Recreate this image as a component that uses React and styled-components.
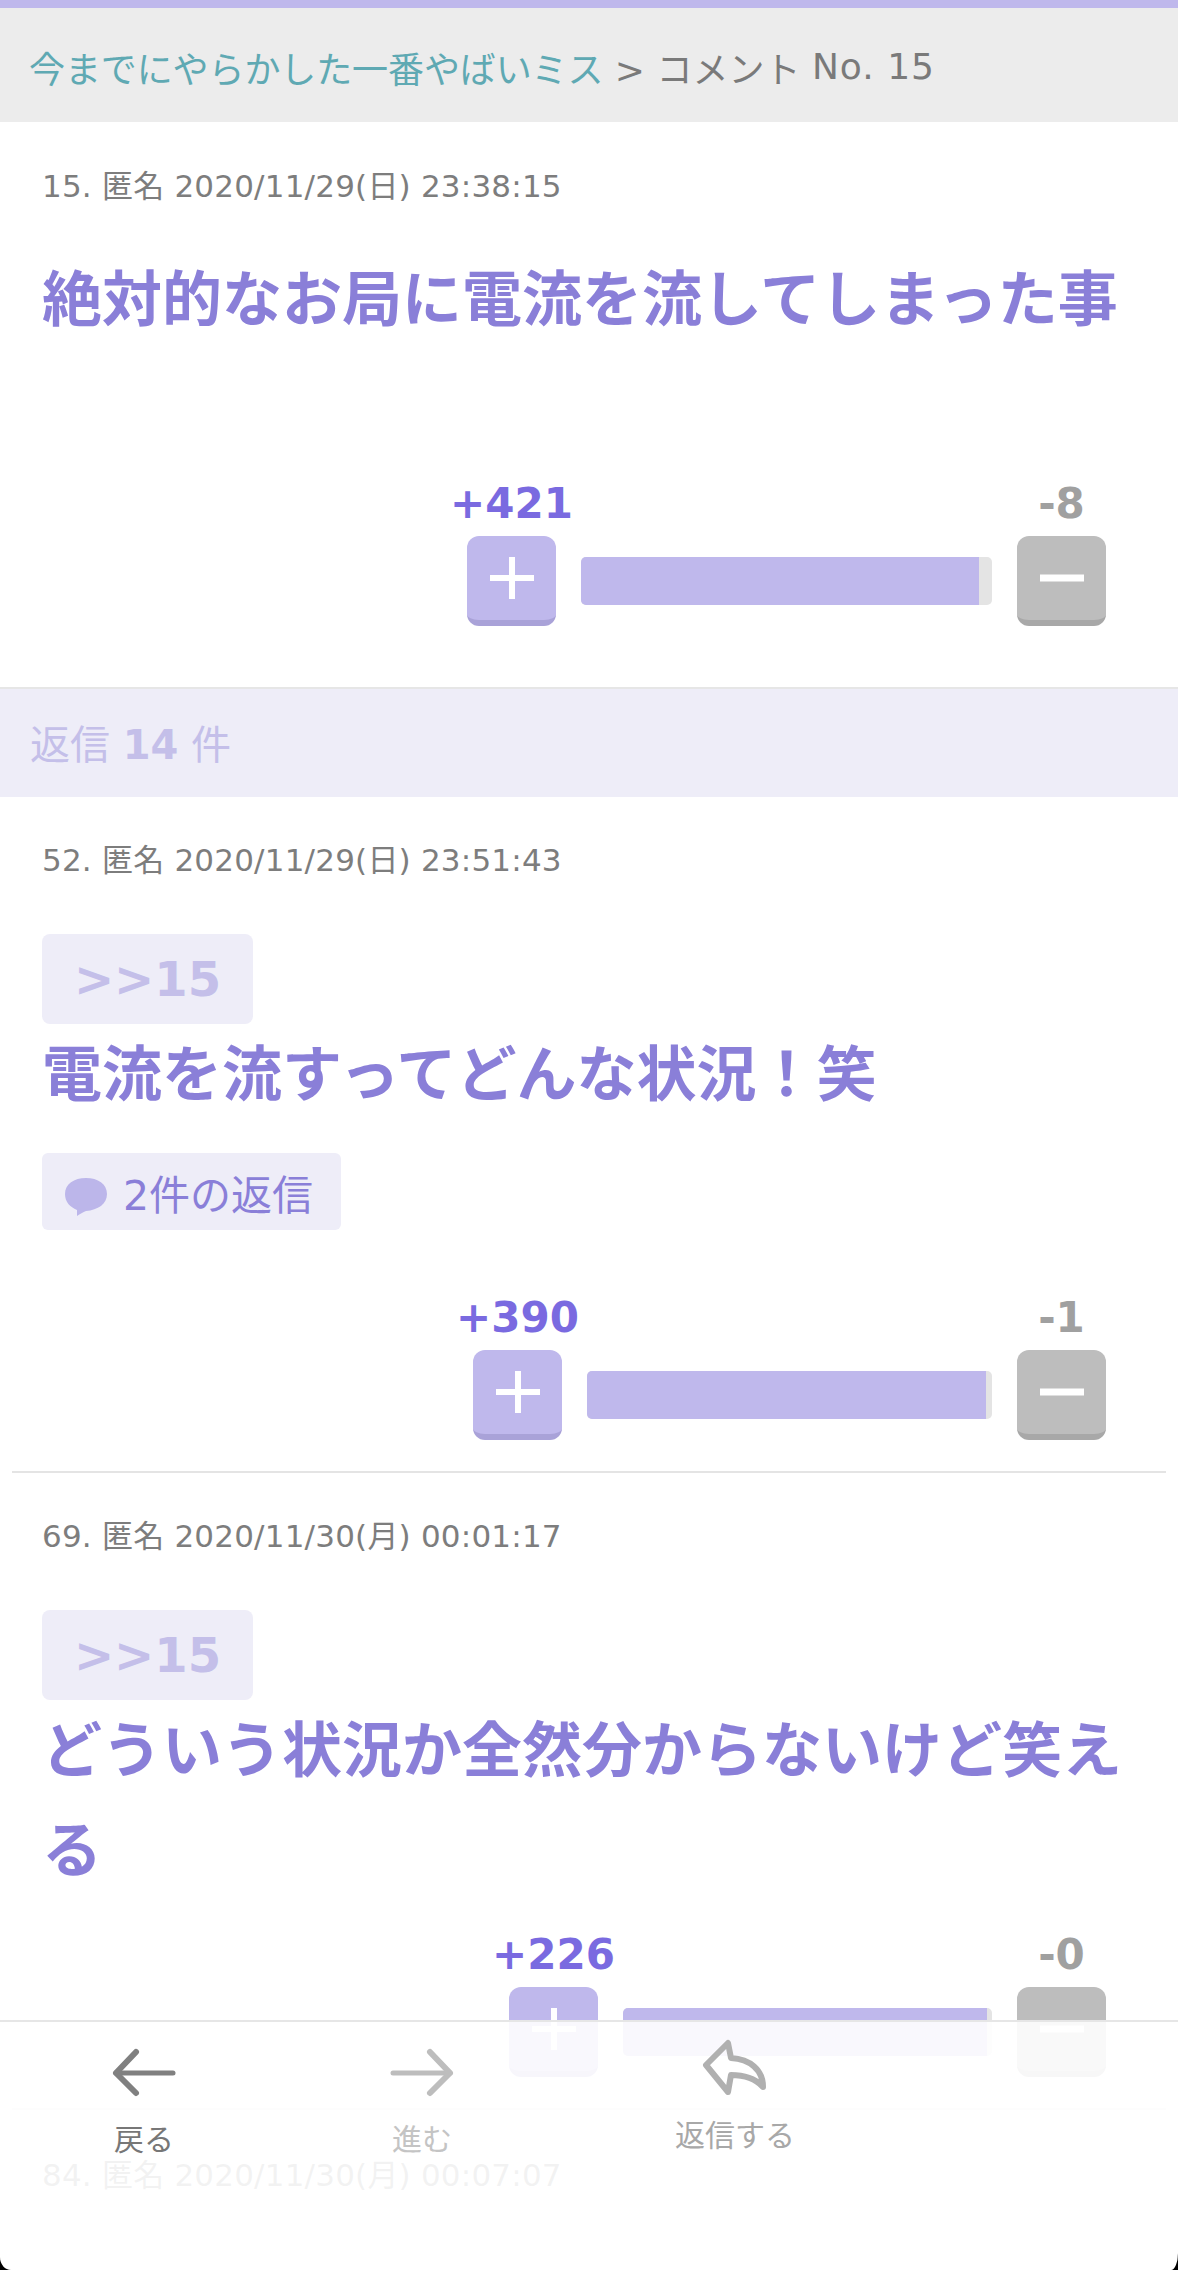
import styled, { createGlobalStyle } from "styled-components";

const GlobalStyle = createGlobalStyle`
  html, body {
    margin: 0;
    padding: 0;
    background: #fff;
  }
  body {
    font-family: "DejaVu Sans", "Noto Sans CJK JP", sans-serif;
  }
`;

const Page = styled.div`
  position: relative;
  width: 100%;
  height: 2270px;
  overflow: hidden;
  background: #fff;
`;

const Breadcrumb = styled.nav`
  height: 111px;
  border-top: 8px solid #bfb8ec;
  padding: 3px 0 0 29px;
  display: flex;
  align-items: center;
  background: #ececec;
  font-size: 36px;
  color: #7a7a7a;
  white-space: pre;
`;

const Crumb = styled.span`
  color: #5fa9b3;
  letter-spacing: -0.1px;
`;

const CommentNo = styled.span`
  letter-spacing: 1px;
`;

const Comment = styled.section`
  padding: ${(p) => p.$top}px 72px ${(p) => p.$bottom}px 42px;
`;

const Meta = styled.div`
  height: 40px;
  line-height: 41px;
  font-size: 31px;
  letter-spacing: 0.2px;
  color: #7d7d7d;
  white-space: nowrap;
`;

const Quote = styled.div`
  width: 211px;
  height: 90px;
  margin-top: 54px;
  border-radius: 8px;
  background: #eeedf8;
  display: flex;
  align-items: center;
  justify-content: center;
  font-size: 48px;
  font-weight: 700;
  color: #c4bfe9;
`;

const Body = styled.p`
  margin: ${(p) => p.$top}px -72px 0 0;
  padding-top: 3px;
  font-size: 60px;
  line-height: 100px;
  font-weight: 700;
  color: #8a7fd8;
`;

const Replies = styled.div`
  width: 299px;
  height: 77px;
  margin-top: 28px;
  padding-left: 23px;
  box-sizing: border-box;
  border-radius: 6px;
  background: #eeedf8;
  display: flex;
  align-items: center;
  gap: 16px;
  font-size: 41px;
  color: #8a7fd8;
`;

const BubbleSvg = styled.svg`
  margin-top: 10px;
  flex: none;
`;

const Vote = styled.div`
  margin-top: ${(p) => p.$top}px;
  display: flex;
  justify-content: flex-end;
  align-items: flex-end;
  gap: 25px;
`;

const VoteColumn = styled.div`
  width: 89px;
  display: flex;
  flex-direction: column;
  align-items: center;
  gap: 9px;
`;

const Count = styled.div`
  height: 50px;
  line-height: 54px;
  font-size: 42px;
  font-weight: 700;
  white-space: nowrap;
  color: ${(p) => (p.$down ? "#a0a0a0" : "#7a6ae0")};
`;

const VoteButton = styled.button`
  width: 89px;
  height: 90px;
  padding: 0;
  box-sizing: border-box;
  border: 0;
  border-bottom: 6px solid ${(p) => (p.$down ? "#a8a8a8" : "#a9a2d8")};
  border-radius: 12px;
  background: ${(p) => (p.$down ? "#bdbdbd" : "#bfb8ec")};
  display: flex;
  align-items: center;
  justify-content: center;
`;

const Bar = styled.div`
  height: 48px;
  margin-bottom: 21px;
  border-radius: 5px;
  overflow: hidden;
  background: #e4e4e4;
`;

const BarFill = styled.div`
  height: 100%;
  background: #bfb8ec;
`;

const Band = styled.div`
  height: 110px;
  line-height: 112px;
  padding-left: 30px;
  border-top: 2px solid #e6e6e6;
  box-sizing: border-box;
  background: #eeedf8;
  font-size: 40px;
  color: #c4bfe9;
`;

const Divider = styled.hr`
  margin: 0 12px;
  border: 0;
  border-top: 2px solid #e4e4e4;
`;

const TabBar = styled.footer`
  position: absolute;
  left: 0;
  right: 0;
  bottom: 0;
  height: 250px;
  box-sizing: border-box;
  padding-top: 21px;
  border-top: 2px solid #e6e6e6;
  background: rgba(255, 255, 255, 0.9);
  display: grid;
  grid-template-columns: 288px 268px 358px;
  align-items: start;
`;

const Tab = styled.div`
  margin-top: ${(p) => (p.$raised ? -6 : 0)}px;
  display: flex;
  flex-direction: column;
  align-items: center;
  font-size: 30px;
`;

const TabLabel = styled.span`
  margin-top: ${(p) => (p.$raised ? 19 : 17)}px;
  line-height: 40px;
  color: ${(p) => p.$color};
`;

const ScreenCorners = styled.div`
  position: absolute;
  inset: 0;
  pointer-events: none;
  border-radius: 0 0 7px 11px / 0 0 17px 13px;
  box-shadow: 0 0 0 30px #000;
`;

function PlusIcon() {
  return (
    <svg width="44" height="44" viewBox="0 0 44 44">
      <path d="M22 1V43M0 22H44" stroke="#fff" strokeWidth="6" />
    </svg>
  );
}

function MinusIcon() {
  return (
    <svg width="44" height="44" viewBox="0 0 44 44">
      <path d="M0 22H44" stroke="#fff" strokeWidth="7" />
    </svg>
  );
}

function BubbleIcon() {
  return (
    <BubbleSvg width="42" height="38" viewBox="0 0 42 38">
      <path
        d="M21 0C33 0 42 6 42 16C42 26 33 32 21 33C18 34 15 36 12 38L12 32C5 29 0 24 0 16C0 6 9 0 21 0Z"
        fill="#bcb6ea"
      />
    </BubbleSvg>
  );
}

function ArrowIcon({ color, flip }) {
  return (
    <svg
      width="70"
      height="60"
      viewBox="0 0 70 60"
      fill="none"
      stroke={color}
      strokeLinecap="round"
      strokeLinejoin="round"
      style={flip ? { transform: "scaleX(-1)" } : undefined}
    >
      <path d="M27 9L7 30L27 50" strokeWidth="6" />
      <path d="M7 30H64" strokeWidth="5" />
    </svg>
  );
}

function ReplyIcon() {
  return (
    <svg
      width="70"
      height="60"
      viewBox="0 0 70 60"
      fill="none"
      stroke="#b0b0b0"
      strokeWidth="6"
      strokeLinejoin="round"
    >
      <path d="M6 28L28 6L31 21C50 22 63 33 63 50C55 41 45 38 31 38L28 55Z" />
    </svg>
  );
}

function VoteBar({ up, down, top, barWidth }) {
  const ratio = up / (up + down);
  return (
    <Vote $top={top}>
      <VoteColumn>
        <Count>+{up}</Count>
        <VoteButton>
          <PlusIcon />
        </VoteButton>
      </VoteColumn>
      <Bar style={{ width: barWidth }}>
        <BarFill style={{ width: (barWidth - 5) * ratio }} />
      </Bar>
      <VoteColumn>
        <Count $down>-{down}</Count>
        <VoteButton $down>
          <MinusIcon />
        </VoteButton>
      </VoteColumn>
    </Vote>
  );
}

export default function App() {
  return (
    <Page>
      <GlobalStyle />
      <Breadcrumb>
        <Crumb>今までにやらかした一番やばいミス</Crumb> &gt; コメント{" "}
        <CommentNo>No. 15</CommentNo>
      </Breadcrumb>

      <Comment $top={44} $bottom={61}>
        <Meta>15. 匿名 2020/11/29(日) 23:38:15</Meta>
        <Body $top={41}>絶対的なお局に電流を流してしまった事</Body>
        <VoteBar up={421} down={8} top={127} barWidth={411} />
      </Comment>

      <Band>
        返信 <b>14</b> 件
      </Band>

      <Comment $top={43} $bottom={31}>
        <Meta>52. 匿名 2020/11/29(日) 23:51:43</Meta>
        <Quote>&gt;&gt;15</Quote>
        <Body $top={-2}>電流を流すってどんな状況！笑</Body>
        <Replies>
          <BubbleIcon />
          2件の返信
        </Replies>
        <VoteBar up={390} down={1} top={61} barWidth={405} />
      </Comment>
      <Divider />

      <Comment $top={43} $bottom={31}>
        <Meta>69. 匿名 2020/11/30(月) 00:01:17</Meta>
        <Quote>&gt;&gt;15</Quote>
        <Body $top={-2}>どういう状況か全然分からないけど笑える</Body>
        <VoteBar up={226} down={0} top={27} barWidth={369} />
      </Comment>
      <Divider />

      <Comment $top={45} $bottom={31}>
        <Meta>84. 匿名 2020/11/30(月) 00:07:07</Meta>
      </Comment>

      <TabBar>
        <Tab>
          <ArrowIcon color="#808080" />
          <TabLabel $color="#777">戻る</TabLabel>
        </Tab>
        <Tab>
          <ArrowIcon color="#bdbdbd" flip />
          <TabLabel $color="#c4c4c4">進む</TabLabel>
        </Tab>
        <Tab $raised>
          <ReplyIcon />
          <TabLabel $raised $color="#a8a8a8">
            返信する
          </TabLabel>
        </Tab>
      </TabBar>
      <ScreenCorners />
    </Page>
  );
}
